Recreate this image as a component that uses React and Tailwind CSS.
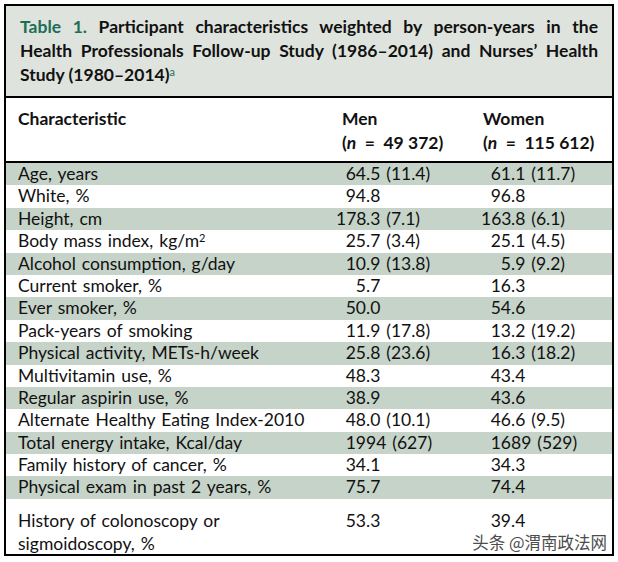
import React from 'react';

const rows = [
  { label: 'Age, years', men: ['64', '.5 (11.4)'], women: ['61', '.1 (11.7)'] },
  { label: 'White, %', men: ['94', '.8'], women: ['96', '.8'] },
  { label: 'Height, cm', men: ['178', '.3 (7.1)'], women: ['163', '.8 (6.1)'] },
  { label: 'Body mass index, kg/m', sup: '2', men: ['25', '.7 (3.4)'], women: ['25', '.1 (4.5)'] },
  { label: 'Alcohol consumption, g/day', men: ['10', '.9 (13.8)'], women: ['5', '.9 (9.2)'] },
  { label: 'Current smoker, %', men: ['5', '.7'], women: ['16', '.3'] },
  { label: 'Ever smoker, %', men: ['50', '.0'], women: ['54', '.6'] },
  { label: 'Pack-years of smoking', men: ['11', '.9 (17.8)'], women: ['13', '.2 (19.2)'] },
  { label: 'Physical activity, METs-h/week', men: ['25', '.8 (23.6)'], women: ['16', '.3 (18.2)'] },
  { label: 'Multivitamin use, %', men: ['48', '.3'], women: ['43', '.4'] },
  { label: 'Regular aspirin use, %', men: ['38', '.9'], women: ['43', '.6'] },
  { label: 'Alternate Healthy Eating Index-2010', men: ['48', '.0 (10.1)'], women: ['46', '.6 (9.5)'] },
  { label: 'Total energy intake, Kcal/day', men: ['19', '94 (627)'], women: ['16', '89 (529)'] },
  { label: 'Family history of cancer, %', men: ['34', '.1'], women: ['34', '.3'] },
  { label: 'Physical exam in past 2 years, %', men: ['75', '.7'], women: ['74', '.4'] },
];

const Value = ({ parts }) => (
  <div className="flex">
    <span className="w-[30px] text-right">{parts[0]}</span>
    <span>{parts[1]}</span>
  </div>
);

export default function App() {
  return (
    <div className="w-[618px] h-[562px] bg-white pt-[4px] pl-[4px]" style={{ fontFamily: 'Lato, "Noto Sans", sans-serif' }}>
      <div className="relative w-[610px] h-[552px] border-2 border-black text-[#111] flex flex-col">
        {/* Title */}
        <div className="h-[92px] shrink-0 bg-[#dfe3dd] border-b-2 border-black px-[14px] pt-[9px] text-[17.5px] font-bold leading-[24px]">
          <div className="text-justify [text-align-last:justify]">
            <span className="text-[#1d6e55]">Table 1.</span> Participant characteristics weighted by person-years in the
          </div>
          <div className="text-justify [text-align-last:justify]">
            Health Professionals Follow-up Study (1986–2014) and Nurses’ Health
          </div>
          <div>
            Study (1980–2014)<sup className="text-[#1d6e55] font-normal text-[11px]">a</sup>
          </div>
        </div>

        {/* Header */}
        <div className="h-[65px] shrink-0 border-b-2 border-black grid grid-cols-[330px_145px_1fr] pt-[9px] text-[17.5px] font-bold leading-[24px]">
          <div className="pl-[12px]">Characteristic</div>
          <div className="pl-[6px]">
            <div>Men</div>
            <div>(<i>n</i> &nbsp;=&nbsp; 49 372)</div>
          </div>
          <div className="pl-[2px]">
            <div>Women</div>
            <div>(<i>n</i> &nbsp;=&nbsp; 115 612)</div>
          </div>
        </div>

        {/* Body */}
        <div className="flex-1 flex flex-col text-[17.5px] leading-[22.4px] [word-spacing:1.5px]">
          {rows.map((r, i) => (
            <div
              key={r.label}
              className={`h-[22.4px] shrink-0 grid grid-cols-[330px_145px_1fr] ${i % 2 === 0 ? 'bg-[#c6d3c8]' : 'bg-white'}`}
            >
              <div className="pl-[12px] whitespace-nowrap">
                {r.label}
                {r.sup && <sup className="text-[11px]">{r.sup}</sup>}
              </div>
              <Value parts={r.men} />
              <Value parts={r.women} />
            </div>
          ))}
          <div className="flex-1 grid grid-cols-[330px_145px_1fr] pt-[10px] leading-[23px]">
            <div className="pl-[12px]">
              History of colonoscopy or
              <br />
              sigmoidoscopy, %
            </div>
            <Value parts={['53', '.3']} />
            <Value parts={['39', '.4']} />
          </div>
        </div>

        {/* Watermark */}
        <div
          className="absolute right-[5px] bottom-[2px] text-[16.5px] leading-[20px] text-[#4d4d4d] [text-shadow:0_0_2px_#fff]"
          style={{ fontFamily: '"Noto Sans CJK SC", sans-serif' }}
        >
          头条 @渭南政法网
        </div>
      </div>
    </div>
  );
}
